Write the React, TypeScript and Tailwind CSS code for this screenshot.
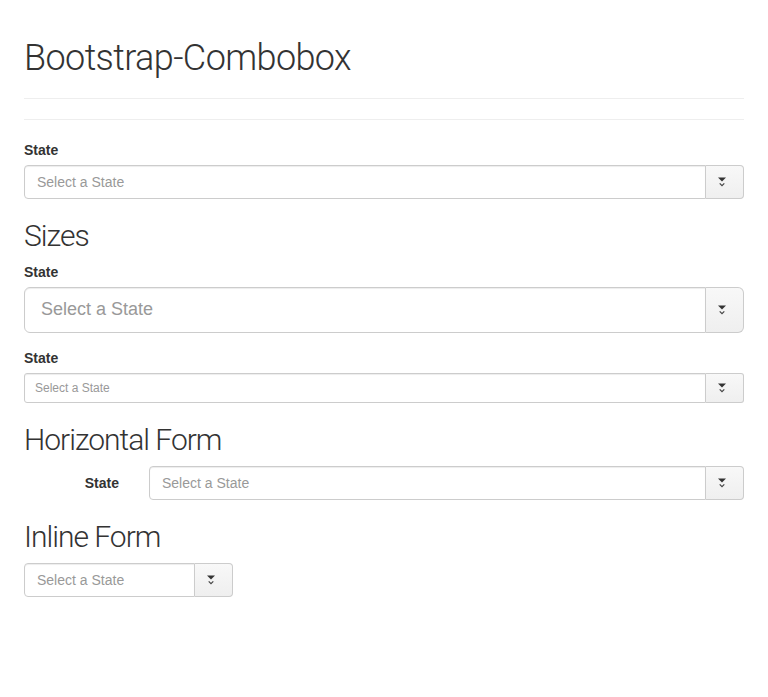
import React from 'react';

type Size = 'sm' | 'md' | 'lg';

const CaretIcon: React.FC = () => (
  <svg width="9" height="10" viewBox="0 0 9 10" aria-hidden="true">
    <path d="M0 0.5 H8 L4 4.5 Z" fill="#333" />
    <path d="M1.7 6.4 L4 8.7 L6.3 6.4" fill="none" stroke="#444" strokeWidth="1.2" />
  </svg>
);

const Combobox: React.FC<{ size?: Size; inputClass?: string }> = ({ size = 'md', inputClass = 'flex-1' }) => {
  const inputSize =
    size === 'lg'
      ? 'h-[46px] px-[16px] text-[18px] rounded-l-[6px]'
      : size === 'sm'
      ? 'h-[30px] px-[10px] text-[12px] rounded-l-[3px]'
      : 'h-[34px] px-[12px] text-[14px] rounded-l-[4px]';
  const addonSize =
    size === 'lg' ? 'h-[46px] rounded-r-[6px]' : size === 'sm' ? 'h-[30px] rounded-r-[3px]' : 'h-[34px] rounded-r-[4px]';

  return (
    <div className="flex w-full">
      <input
        type="text"
        placeholder="Select a State"
        className={`${inputSize} ${inputClass} min-w-0 border border-[#ccc] bg-white text-[#555] placeholder:text-[#999] shadow-[inset_0_1px_1px_rgba(0,0,0,0.075)] outline-none`}
      />
      <span className={`${addonSize} w-[38px] shrink-0 flex items-center pl-[12px] border border-l-0 border-[#ccc] bg-gradient-to-b from-[#f8f8f8] to-[#efefef]`}>
        <CaretIcon />
      </span>
    </div>
  );
};

const App: React.FC = () => {
  return (
    <div className="w-[750px] mx-auto px-[15px] pb-[40px] text-[#333] text-[14px] leading-[20px] font-['Liberation_Sans',Arial,sans-serif]">
      {/* page header */}
      <div className="pt-[39px] pb-[9px] border-b border-[#eee]">
        <h1 className="mb-[10px] text-[36px] leading-[1.1] tracking-[-0.6px] font-light font-['Roboto','Liberation_Sans',sans-serif]">
          Bootstrap-Combobox
        </h1>
      </div>
      <hr className="my-[20px] border-t border-[#eee]" />

      <div className="mb-[15px]">
        <label className="block mb-[5px] font-bold">State</label>
        <Combobox />
      </div>

      <h2 className="mt-[20px] mb-[10px] text-[30px] leading-[1.1] tracking-[-1px] font-light font-['Roboto','Liberation_Sans',sans-serif]">Sizes</h2>
      <div className="mb-[15px]">
        <label className="block mb-[5px] font-bold">State</label>
        <Combobox size="lg" />
      </div>
      <div>
        <label className="block mb-[5px] font-bold">State</label>
        <Combobox size="sm" />
      </div>

      <h2 className="mt-[20px] mb-[10px] text-[30px] leading-[1.1] tracking-[-1px] font-light font-['Roboto','Liberation_Sans',sans-serif]">Horizontal Form</h2>
      <div className="flex -mx-[15px]">
        <label className="w-[125px] px-[15px] pt-[7px] text-right font-bold">State</label>
        <div className="flex-1 px-[15px]">
          <Combobox />
        </div>
      </div>

      <h2 className="mt-[20px] mb-[10px] text-[30px] leading-[1.1] tracking-[-1px] font-light font-['Roboto','Liberation_Sans',sans-serif]">Inline Form</h2>
      <div className="flex">
        <div className="w-[209px]">
          <Combobox inputClass="w-[171px]" />
        </div>
      </div>
    </div>
  );
};

export default App;
